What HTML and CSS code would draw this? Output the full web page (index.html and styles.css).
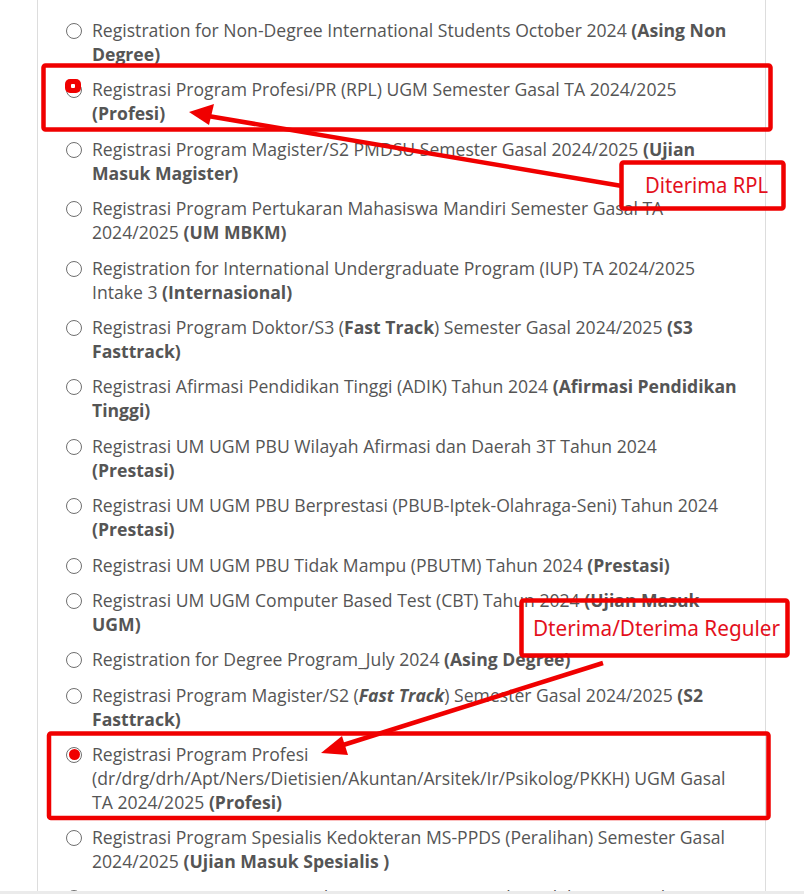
FILE: index.html
```html
<!DOCTYPE html>
<html lang="en">
<head>
    <meta charset="UTF-8">
    <meta name="viewport" content="width=device-width, initial-scale=1.0">
    <title>Pilih Jalur Registrasi</title>
    <link rel="stylesheet" href="styles.css">
</head>
<body>
    <div class="panel">
        <ul class="options">
            <li class="option">
                <span class="radio"></span>
                <span class="label">Registration for Non-Degree International Students October 2024 <b>(Asing Non Degree)</b></span>
            </li>
            <li class="option">
                <span class="radio marked-rpl"></span>
                <span class="label">Registrasi Program Profesi/PR (RPL) UGM Semester Gasal TA 2024/2025 <b>(Profesi)</b></span>
            </li>
            <li class="option">
                <span class="radio"></span>
                <span class="label">Registrasi Program Magister/S2 PMDSU Semester Gasal 2024/2025 <b>(Ujian Masuk Magister)</b></span>
            </li>
            <li class="option">
                <span class="radio"></span>
                <span class="label">Registrasi Program Pertukaran Mahasiswa Mandiri Semester Gasal TA 2024/2025 <b>(UM MBKM)</b></span>
            </li>
            <li class="option">
                <span class="radio"></span>
                <span class="label">Registration for International Undergraduate Program (IUP) TA 2024/2025 Intake 3 <b>(Internasional)</b></span>
            </li>
            <li class="option">
                <span class="radio"></span>
                <span class="label">Registrasi Program Doktor/S3 (<b>Fast Track</b>) Semester Gasal 2024/2025 <b>(S3 Fasttrack)</b></span>
            </li>
            <li class="option">
                <span class="radio"></span>
                <span class="label">Registrasi Afirmasi Pendidikan Tinggi (ADIK) Tahun 2024 <b>(Afirmasi Pendidikan Tinggi)</b></span>
            </li>
            <li class="option">
                <span class="radio"></span>
                <span class="label">Registrasi UM UGM PBU Wilayah Afirmasi dan Daerah 3T Tahun 2024 <b>(Prestasi)</b></span>
            </li>
            <li class="option">
                <span class="radio"></span>
                <span class="label">Registrasi UM UGM PBU Berprestasi (PBUB-Iptek-Olahraga-Seni) Tahun 2024 <b>(Prestasi)</b></span>
            </li>
            <li class="option">
                <span class="radio"></span>
                <span class="label">Registrasi UM UGM PBU Tidak Mampu (PBUTM) Tahun 2024 <b>(Prestasi)</b></span>
            </li>
            <li class="option">
                <span class="radio"></span>
                <span class="label">Registrasi UM UGM Computer Based Test (CBT) Tahun 2024 <b>(Ujian Masuk UGM)</b></span>
            </li>
            <li class="option">
                <span class="radio"></span>
                <span class="label">Registration for Degree Program_July 2024 <b>(Asing Degree)</b></span>
            </li>
            <li class="option">
                <span class="radio"></span>
                <span class="label">Registrasi Program Magister/S2 (<b><i>Fast Track</i></b>) Semester Gasal 2024/2025 <b>(S2 Fasttrack)</b></span>
            </li>
            <li class="option">
                <span class="radio marked-profesi"></span>
                <span class="label">Registrasi Program Profesi (dr/drg/drh/Apt/Ners/Dietisien/Akuntan/Arsitek/Ir/Psikolog/PKKH) UGM Gasal TA 2024/2025 <b>(Profesi)</b></span>
            </li>
            <li class="option">
                <span class="radio"></span>
                <span class="label">Registrasi Program Spesialis Kedokteran MS-PPDS (Peralihan) Semester Gasal 2024/2025 <b>(Ujian Masuk Spesialis )</b></span>
            </li>
            <li class="option">
                <span class="radio"></span>
                <span class="label">Registrasi Program Sarjana dan Sarjana Terapan Jalur Seleksi Nasional Berdasarkan Tes</span>
            </li>
        </ul>
    </div>

    <!-- red markings drawn on top of the screenshot -->
    <svg class="markup" width="804" height="894" viewBox="0 0 804 894">
        <g fill="none" stroke="#f00000" stroke-width="4.5" stroke-linejoin="round">
            <rect x="43.5" y="65.5" width="727" height="64" rx="2"/>
            <rect x="621.5" y="162.5" width="162" height="46" rx="2"/>
            <rect x="521.5" y="600.5" width="266" height="55" rx="2"/>
            <rect x="49" y="733.5" width="719.5" height="84.5" rx="2"/>
            <line x1="622" y1="186" x2="208" y2="116"/>
            <line x1="603" y1="663" x2="340" y2="746"/>
        </g>
        <g fill="#f00000">
            <polygon points="189,112 214,104 209,125"/>
            <polygon points="321,753 342,736 348,755"/>
        </g>
        <text class="note" x="645" y="193" textLength="123" lengthAdjust="spacingAndGlyphs">Diterima RPL</text>
        <text class="note" x="533" y="636" textLength="247" lengthAdjust="spacingAndGlyphs">Dterima/Dterima Reguler</text>
    </svg>

    <div class="edge"></div>
</body>
</html>
```
FILE: styles.css
```css
body {
    margin: 0;
    background-color: #fff;
    font-family: 'Open Sans', 'Noto Sans', sans-serif;
    color: #555;
    overflow: hidden;
    height: 894px;
}

.panel {
    margin-left: 37px;
    width: 727px;
    height: 894px;
    overflow: hidden;
    border-left: 1px solid #ddd;
    border-right: 1px solid #ddd;
}

.options {
    list-style: none;
    margin: 0;
    padding: 18px 24px 0 28px;
}

.option {
    display: flex;
    gap: 10px;
    margin-bottom: 11.4px;
    font-size: 17.6px;
    line-height: 24px;
}

.option b {
    color: #555;
}

.radio {
    flex: none;
    width: 16px;
    height: 16px;
    margin-top: 5px;
    border: 1.5px solid #6f6f6f;
    border-radius: 50%;
    box-sizing: border-box;
    position: relative;
}

.radio.marked-rpl::after {
    content: "";
    position: absolute;
    left: -2px;
    top: -4px;
    width: 16px;
    height: 14px;
    border-radius: 5px;
    background: radial-gradient(circle, #fff 0 2px, #f00000 2.5px);
}

.radio.marked-profesi::after {
    content: "";
    position: absolute;
    left: 2px;
    top: 1px;
    width: 11px;
    height: 11px;
    border-radius: 50%;
    background-color: #f00000;
}

.label {
    flex: 1;
}

.markup {
    position: absolute;
    top: 0;
    left: 0;
    pointer-events: none;
}

.note {
    font-family: 'Noto Sans', 'Open Sans', sans-serif;
    font-size: 22px;
    fill: #e3101c;
}

.edge {
    position: fixed;
    left: 0;
    right: 0;
    bottom: 0;
    height: 3px;
    background-color: #ebebeb;
}
```
